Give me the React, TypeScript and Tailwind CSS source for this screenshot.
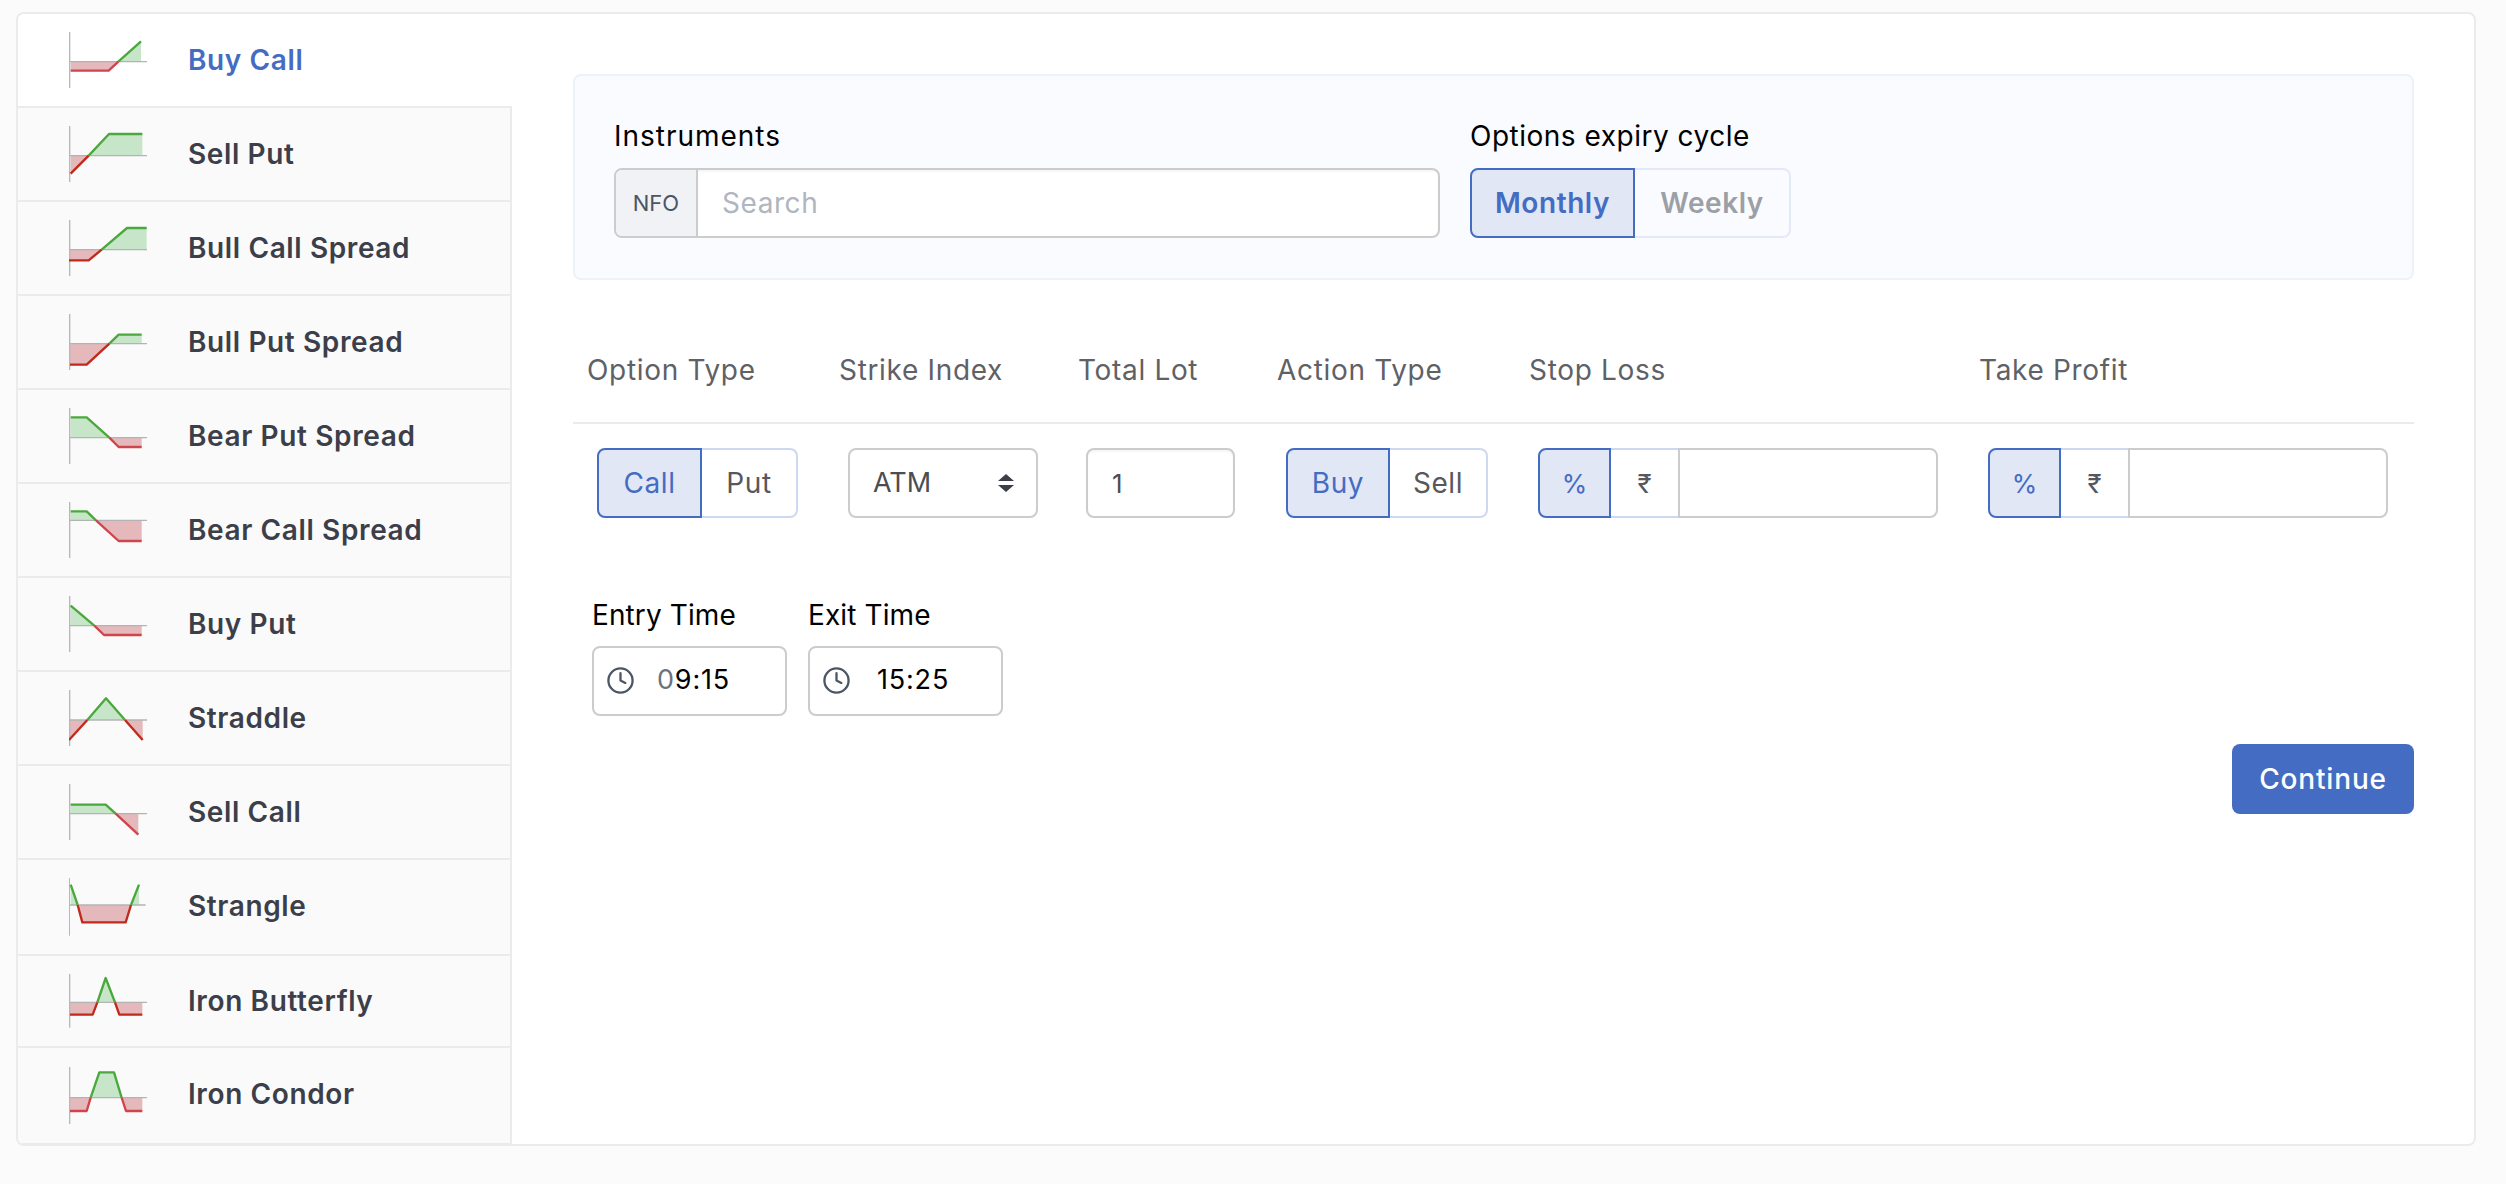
import React from "react";
import { Clock } from "lucide-react";

type Seg = { c: "r" | "g"; p: number[][] };
type Icon = { top: number; base: number; end?: number; dark?: boolean; axisX?: number; h?: number; segs: Seg[] };

const icons: Record<string, Icon> = {
  "Buy Call": { top: 99, base: 188, segs: [{ c: "r", p: [[212, 215], [326, 215], [355, 188]] }, { c: "g", p: [[355, 188], [423, 127]] }] },
  "Sell Put": { top: 381, base: 470, dark: true, segs: [{ c: "r", p: [[212, 524], [266, 470]] }, { c: "g", p: [[266, 470], [327, 405], [427, 405]] }] },
  "Bull Call Spread": { top: 663, base: 752, dark: true, segs: [{ c: "r", p: [[207, 784], [266, 784], [305, 752]] }, { c: "g", p: [[305, 752], [381, 687], [440, 687]] }] },
  "Bull Put Spread": { top: 945, base: 1034, dark: true, segs: [{ c: "r", p: [[210, 1097], [260, 1097], [328, 1034]] }, { c: "g", p: [[328, 1034], [356, 1007], [425, 1007]] }] },
  "Bear Put Spread": { top: 57, base: 146, segs: [{ c: "g", p: [[212, 85], [260, 85], [328, 146]] }, { c: "r", p: [[328, 146], [356, 174], [425, 174]] }] },
  "Bear Call Spread": { top: 339, base: 394, segs: [{ c: "g", p: [[212, 367], [260, 367], [288, 394]] }, { c: "r", p: [[288, 394], [356, 456], [425, 456]] }] },
  "Buy Put": { top: 621, base: 710, segs: [{ c: "g", p: [[212, 650], [283, 710]] }, { c: "r", p: [[283, 710], [312, 738], [425, 738]] }] },
  Straddle: { top: 903, base: 993, dark: true, segs: [{ c: "r", p: [[207, 1053], [262, 993]] }, { c: "g", p: [[262, 993], [318, 928], [375, 993]] }, { c: "r", p: [[375, 993], [428, 1053]] }] },
  "Sell Call": { top: 3, base: 92, segs: [{ c: "g", p: [[212, 65], [317, 65], [347, 92]] }, { c: "r", p: [[347, 92], [415, 155]] }] },
  Strangle: { top: 285, base: 366, dark: true, axisX: 208, h: 173, end: 437, segs: [{ c: "g", p: [[212, 305], [233, 366]] }, { c: "r", p: [[233, 366], [247, 418], [377, 418], [393, 366]] }, { c: "g", p: [[393, 366], [417, 305]] }] },
  "Iron Butterfly": { top: 573, base: 658, dark: true, h: 161, segs: [{ c: "r", p: [[210, 695], [278, 695], [292, 658]] }, { c: "g", p: [[292, 658], [317, 585], [345, 658]] }, { c: "r", p: [[345, 658], [358, 695], [427, 695]] }] },
  "Iron Condor": { top: 849, base: 941, h: 173, segs: [{ c: "r", p: [[210, 981], [260, 981], [272, 941]] }, { c: "g", p: [[272, 941], [298, 865], [342, 865], [365, 941]] }, { c: "r", p: [[365, 941], [378, 981], [427, 981]] }] },
};

function PayoffIcon({ name }: { name: string }) {
  const ic = icons[name];
  const h = ic.h ?? 168;
  const ax = ic.axisX ?? 209;
  const red = ic.dark ? "#c0291b" : "#d0444c";
  return (
    <svg width={78} height={h / 3} viewBox={`207 ${ic.top} 234 ${h}`} className="block shrink-0">
      {ic.segs.map((s, i) => {
        const first = s.p[0];
        const last = s.p[s.p.length - 1];
        const pts = [[first[0], ic.base], ...s.p, [last[0], ic.base]].map((q) => q.join(",")).join(" ");
        return <polygon key={i} points={pts} fill={s.c === "g" ? "#c7e6c9" : "#e5b9bb"} />;
      })}
      <line x1={207} x2={ic.end ?? 441} y1={ic.base} y2={ic.base} stroke="#b3b3b3" strokeWidth={4} />
      <line x1={ax} x2={ax} y1={ic.top} y2={ic.top + h} stroke="#b8b8b8" strokeWidth={4} />
      {ic.segs.map((s, i) => (
        <polyline key={i} points={s.p.map((q) => q.join(",")).join(" ")} fill="none" stroke={s.c === "g" ? "#4aa83c" : red} strokeWidth={7} strokeLinejoin="round" />
      ))}
    </svg>
  );
}

const rows: { name: string; h: string }[] = [
  { name: "Buy Call", h: "h-[94px]" },
  { name: "Sell Put", h: "h-[94px]" },
  { name: "Bull Call Spread", h: "h-[94px]" },
  { name: "Bull Put Spread", h: "h-[94px]" },
  { name: "Bear Put Spread", h: "h-[94px]" },
  { name: "Bear Call Spread", h: "h-[94px]" },
  { name: "Buy Put", h: "h-[94px]" },
  { name: "Straddle", h: "h-[94px]" },
  { name: "Sell Call", h: "h-[94px]" },
  { name: "Strangle", h: "h-[96px]" },
  { name: "Iron Butterfly", h: "h-[92px]" },
  { name: "Iron Condor", h: "h-[97px]" },
];

function Seg2({ a, b, wa, wb, muted }: { a: string; b: string; wa: string; wb: string; muted?: boolean }) {
  return (
    <div className="flex h-[70px]">
      <button className={`${wa} h-full rounded-l-lg border-2 border-[#456cc3] bg-[#e1e7f5] text-[28px] tracking-[0.02em] text-[#456cc3] ${muted ? "font-semibold" : "font-normal"}`}>{a}</button>
      <button className={`${wb} h-full rounded-r-lg border-y-2 border-r-2 ${muted ? "border-[#e3e9f7] font-semibold text-[#9ca0a6]" : "border-[#cdd9f0] font-normal text-[#56585e]"} text-[28px] tracking-[0.02em]`}>{b}</button>
    </div>
  );
}

function StopInput() {
  return (
    <div className="flex h-[70px] w-[400px]">
      <button className="h-full w-[73px] rounded-l-lg border-2 border-[#456cc3] bg-[#e1e7f5] text-[26px] text-[#456cc3]">%</button>
      <button className="h-full w-[67px] border-y-2 border-[#cdd9f0] text-[26px] text-[#56585e]">₹</button>
      <input className="h-full min-w-0 flex-1 rounded-r-lg border-2 border-[#cccccc] bg-white outline-none" />
    </div>
  );
}

function TimeBox({ children }: { children: React.ReactNode }) {
  return (
    <div className="flex h-[70px] w-[195px] items-center rounded-lg border-2 border-[#cccccc] bg-white pb-[2px] pl-[12px] text-[27px] text-black">
      <Clock size={29} strokeWidth={1.9} className="shrink-0 text-[#4b5563]" />
      {children}
    </div>
  );
}

const head = "pl-[14px] text-[28px] leading-[36px] font-normal tracking-[0.024em] text-[#5f6166]";
const label = "text-[28px] leading-[36px] tracking-[0.018em] text-black";
const timeLabel = "mb-[13px] text-[28px] leading-[36px] tracking-[0.004em] text-black";

export default function App() {
  return (
    <div className="min-h-[1184px] bg-[#fbfbfb] px-[16px] pt-[12px] font-['Inter',sans-serif]">
      <div className="flex h-[1134px] w-[2460px] overflow-hidden rounded-lg border-2 border-[#ebebeb] bg-white">
        <div className="w-[494px] shrink-0">
          {rows.map((r, i) => (
            <div
              key={r.name}
              className={`flex items-center border-b-2 border-[#ebebeb] pl-[51px] ${r.h} ${i === 0 ? "bg-white" : "border-r-2 bg-[#fafafa]"}`}
            >
              <PayoffIcon name={r.name} />
              <span className={`ml-[41px] text-[28px] font-semibold tracking-[0.022em] ${i === 0 ? "text-[#456cc3]" : "text-[#3c3f49]"} ${i === 9 || i === 11 ? "mb-[3px]" : ""}`}>{r.name}</span>
            </div>
          ))}
        </div>

        <div className="flex min-w-0 flex-1 flex-col pl-[61px] pr-[60px] pt-[60px]">
          <div className="flex h-[206px] gap-[30px] rounded-lg border-2 border-[#edf1fa] bg-[#fafbfe] pl-[39px] pt-[42px]">
            <div className="w-[826px]">
              <div className="mb-[14px] text-[28px] leading-[36px] tracking-[0.035em] text-black">Instruments</div>
              <div className="flex h-[70px] overflow-hidden rounded-lg border-2 border-[#cccccc] bg-white">
                <div className="flex w-[82px] items-center justify-center border-r-2 border-[#cccccc] bg-[#f1f2f6] text-[22px] text-[#4b5563]">NFO</div>
                <input placeholder="Search" className="min-w-0 flex-1 pl-[24px] text-[28px] tracking-[0.02em] outline-none placeholder:text-[#b0b5bf] shadow-[inset_0_2px_2px_rgba(0,0,0,0.04)]" />
              </div>
            </div>
            <div>
              <div className={`mb-[14px] ${label}`}>Options expiry cycle</div>
              <Seg2 a="Monthly" b="Weekly" wa="w-[165px]" wb="w-[156px]" muted />
            </div>
          </div>

          <div className="mt-[72px] grid grid-cols-[252px_239px_199px_252px_450px_449px] border-b-2 border-[#ebebeb] pb-[34px]">
            <div className={head}>Option Type</div>
            <div className={head}>Strike Index</div>
            <div className={head}>Total Lot</div>
            <div className={head}>Action Type</div>
            <div className={head}>Stop Loss</div>
            <div className={head}>Take Profit</div>
          </div>

          <div className="mt-[24px] grid grid-cols-[252px_239px_199px_252px_450px_449px]">
            <div className="pl-[24px]"><Seg2 a="Call" b="Put" wa="w-[105px]" wb="w-[96px]" /></div>
            <div className="pl-[23px]">
              <div className="flex h-[70px] w-[190px] items-center justify-between rounded-lg border-2 border-[#cccccc] bg-white pl-[23px] pr-[22px] text-[27px] text-[#4b4d52]">
                <span>ATM</span>
                <svg width="16" height="18" viewBox="0 0 16 18" className="block"><path d="M8 0 L16 7 H0 Z M0 11 H16 L8 18 Z" fill="#3c3f49" /></svg>
              </div>
            </div>
            <div className="pl-[22px]">
              <input defaultValue="1" className="h-[70px] w-[149px] rounded-lg border-2 border-[#cccccc] bg-white pl-[24px] text-[26px] text-[#4b4d52] outline-none shadow-[inset_0_2px_2px_rgba(0,0,0,0.04)]" />
            </div>
            <div className="pl-[23px]"><Seg2 a="Buy" b="Sell" wa="w-[104px]" wb="w-[98px]" /></div>
            <div className="pl-[23px]"><StopInput /></div>
            <div className="pl-[23px]"><StopInput /></div>
          </div>

          <div className="ml-[19px] mt-[79px] flex gap-[21px]">
            <div>
              <div className={timeLabel}>Entry Time</div>
              <TimeBox>
                <span className="ml-[22px] tracking-[0.03em]"><span className="text-[#6b7280]">0</span>9:15</span>
              </TimeBox>
            </div>
            <div>
              <div className={timeLabel}>Exit Time</div>
              <TimeBox>
                <span className="ml-[26px] tracking-[0.03em]">15:25</span>
              </TimeBox>
            </div>
          </div>

          <button className="mt-[28px] h-[70px] w-[182px] self-end rounded-lg bg-[#456cc3] text-[28px] font-medium tracking-[0.03em] text-white">Continue</button>
        </div>
      </div>
    </div>
  );
}
